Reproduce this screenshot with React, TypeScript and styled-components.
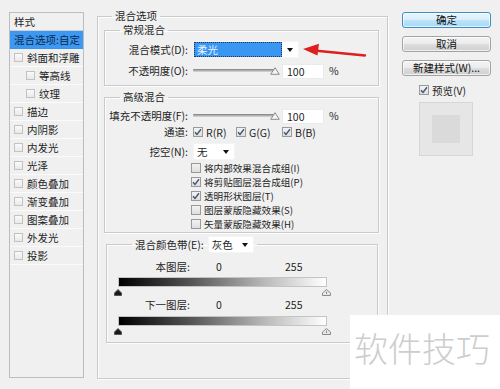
import styled, { createGlobalStyle } from "styled-components";

const GlobalStyle = createGlobalStyle`
  html, body { margin: 0; padding: 0; background: #f0f0f0; }
  body {
    font-family: "Noto Sans CJK SC", "Noto Sans", sans-serif;
    font-size: 10.5px;
    line-height: 14px;
    color: #1e1e1e;
  }
  * { box-sizing: border-box; }
`;

const Dialog = styled.div`
  position: relative;
  width: 500px;
  height: 389px;
  overflow: hidden;
  display: flex;
  align-items: flex-start;
  padding-left: 9px;
  background: #f0f0f0;
`;

/* ---------- left style list ---------- */

const StylePanel = styled.div`
  margin-top: 12px;
  width: 75px;
  height: 366px;
  border: 1px solid #bdbdbd;
  display: flex;
  flex-direction: column;
`;

const PanelHeader = styled.div`
  height: 18px;
  padding-left: 4px;
  line-height: 17px;
  border-bottom: 1px solid #d0d0d0;
`;

const PanelRow = styled.div<{ $indent?: number; $active?: boolean }>`
  display: flex;
  align-items: center;
  gap: 4px;
  height: 18px;
  padding-left: ${(p) => 4 + (p.$indent ?? 0) * 12}px;
  border-bottom: 1px solid ${(p) => (p.$active ? "#3a94ee" : "#fbfbfb")};
  background: ${(p) => (p.$active ? "#3d98f2" : "transparent")};
  color: ${(p) => (p.$active ? "#0d2745" : "#1e1e1e")};
  white-space: nowrap;
`;

const PanelBox = styled.span`
  width: 9px;
  height: 9px;
  border: 1px solid #c2c2c2;
  background: linear-gradient(#fafafa, #e9e9e9);
  flex: none;
`;

/* ---------- group boxes ---------- */

const Group = styled.fieldset<{ $height: number; $gapTop?: number }>`
  margin: ${(p) => p.$gapTop ?? 0}px 0 0 0;
  padding: 0;
  min-width: 0;
  height: ${(p) => p.$height}px;
  border: 1px solid #cacaca;
  box-shadow: inset 1px 1px 0 #fdfdfd, 1px 1px 0 #fdfdfd;
  display: flex;
  flex-direction: column;
`;

const MainGroup = styled(Group)`
  margin: 9px 0 0 13px;
  width: 291px;
  padding: 0 8px 0 6px;
`;

const BandGroup = styled(Group)`
  margin: 3px 1px 0 2px;
`;

const Legend = styled.legend<{ $offset: number }>`
  margin-left: ${(p) => p.$offset}px;
  padding: 0 3px;
  line-height: 14px;
  display: flex;
  align-items: center;
  gap: 4px;
`;

const Rows = styled.div<{ $top: number; $gap?: number }>`
  display: flex;
  flex-direction: column;
  gap: ${(p) => p.$gap ?? 0}px;
  padding-top: ${(p) => p.$top}px;
`;

const Row = styled.div<{ $height?: number; $mt?: number }>`
  display: flex;
  align-items: center;
  height: ${(p) => p.$height ?? 14}px;
  margin-top: ${(p) => p.$mt ?? 0}px;
`;

const Label = styled.span<{ $width?: number }>`
  width: ${(p) => p.$width ?? 83}px;
  text-align: right;
  margin-right: 5px;
  white-space: nowrap;
  flex: none;
`;

/* ---------- controls ---------- */

const Select = styled.div<{ $width: number }>`
  display: flex;
  align-items: center;
  width: ${(p) => p.$width}px;
  height: 17px;
  background: #fff;
  border: 1px solid #f4f4f4;
`;

const SelectValue = styled.span<{ $focused?: boolean }>`
  flex: 1;
  height: 100%;
  padding-left: 3px;
  line-height: 15px;
  background: ${(p) => (p.$focused ? "#3a96f3" : "transparent")};
  color: ${(p) => (p.$focused ? "#eaf4ff" : "#1e1e1e")};
  outline: ${(p) => (p.$focused ? "1px dotted #1b3552" : "none")};
  outline-offset: -1px;
`;

const Caret = styled.span`
  width: 16px;
  display: flex;
  justify-content: center;
  &::after {
    content: "";
    border-left: 3.5px solid transparent;
    border-right: 3.5px solid transparent;
    border-top: 4px solid #111;
  }
`;

const Slider = styled.div`
  position: relative;
  width: 82px;
  height: 3px;
  margin-top: -2px;
  background: linear-gradient(#7d7d7d, #b9b9b9 60%, #dadada);
  border-radius: 1px;
  flex: none;
`;

const SliderThumb = styled.svg`
  position: absolute;
  right: -5px;
  top: -2px;
`;

const NumberBox = styled.span`
  width: 42px;
  height: 15px;
  margin-left: 7px;
  padding-left: 4px;
  line-height: 13px;
  background: #fff;
  border: 1px solid #ebebeb;
`;

const Unit = styled.span`
  margin-left: 5px;
`;

const CheckItem = styled.label<{ $width?: number }>`
  display: flex;
  align-items: center;
  gap: 3px;
  height: 13px;
  line-height: 13px;
  width: ${(p) => (p.$width ? `${p.$width}px` : "auto")};
  white-space: nowrap;
`;

const Box = styled.span`
  width: 10px;
  height: 10px;
  border: 1px solid #9a9a9a;
  background: linear-gradient(#f3f3f3, #dedede);
  display: flex;
  align-items: center;
  justify-content: center;
  flex: none;
`;

const CheckList = styled.div`
  display: flex;
  flex-direction: column;
  margin: 1px 0 0 86px;
  font-size: 9.6px;
`;

const CheckRow = styled.div`
  height: 14px;
  display: flex;
  align-items: center;
`;

/* ---------- blend-if bands ---------- */

const LevelRow = styled.div<{ $mt: number }>`
  display: flex;
  align-items: center;
  height: 14px;
  margin-top: ${(p) => p.$mt}px;
`;

const LevelValue = styled.span<{ $ml: number; $width?: number }>`
  margin-left: ${(p) => p.$ml}px;
  width: ${(p) => (p.$width ? `${p.$width}px` : "auto")};
`;

const Ramp = styled.div<{ $mt: number }>`
  margin: ${(p) => p.$mt}px 0 0 11px;
  width: 209px;
  height: 10px;
  border: 1px solid #c4c4c4;
  background: linear-gradient(90deg, #000 0%, #555 35%, #b8b8b8 70%, #fff 100%);
`;

const ThumbRow = styled.div`
  display: flex;
  justify-content: space-between;
  width: 217px;
  margin: 2px 0 0 7px;
  height: 7px;
`;

/* ---------- right column ---------- */

const SideColumn = styled.div`
  margin: 12px 0 0 14px;
  width: 89px;
  display: flex;
  flex-direction: column;
  align-items: stretch;
`;

const Button = styled.div<{ $primary?: boolean; $mt?: number }>`
  height: 16px;
  margin-top: ${(p) => p.$mt ?? 0}px;
  border: 1px solid ${(p) => (p.$primary ? "#3c8ec6" : "#a3a3a3")};
  border-radius: 3px;
  background: ${(p) =>
    p.$primary
      ? "linear-gradient(#eaf6fd, #d6eefb 50%, #bde3f6 51%, #a7d9f5)"
      : "linear-gradient(#f4f4f4, #ebebeb 50%, #dddddd 51%, #cfcfcf)"};
  box-shadow: inset 0 0 0 1px rgba(255, 255, 255, 0.7);
  text-align: center;
  line-height: 14px;
  color: #111;
`;

const PreviewCheck = styled(CheckItem)`
  margin: 7px 0 0 17px;
  height: 14px;
`;

const PreviewBox = styled.div`
  margin: 5px 0 0 17px;
  width: 54px;
  height: 54px;
  border: 1px solid #d6d6d6;
  background: #e6e6e6;
  display: flex;
  align-items: center;
  justify-content: center;
`;

const PreviewSwatch = styled.div`
  width: 28px;
  height: 28px;
  background: #dadada;
`;

/* ---------- overlays ---------- */

const Arrow = styled.svg`
  position: absolute;
  left: 300px;
  top: 40px;
`;

const Watermark = styled.div`
  position: absolute;
  right: 0;
  bottom: 0;
  width: 150px;
  height: 74px;
  background: #fff;
  color: #cdcdcd;
  font-size: 34px;
  font-weight: 300;
  padding: 13px 0 0 4px;
  line-height: 40px;
`;

const Tick = () => (
  <svg width="8" height="8" viewBox="0 0 8 8">
    <path d="M1 4.2 L3 6.4 L7 1.3" fill="none" stroke="#3f5676" strokeWidth="1.4" />
  </svg>
);

const Check = ({ checked, text, width }: { checked?: boolean; text: string; width?: number }) => (
  <CheckItem $width={width}>
    <Box>{checked && <Tick />}</Box>
    {text}
  </CheckItem>
);

const DarkThumb = () => (
  <svg width="8" height="7" viewBox="0 0 8 7">
    <path d="M4 0.5 L7.5 4 L7.5 6.5 L0.5 6.5 L0.5 4 Z" fill="#1a1a1a" stroke="#555" />
  </svg>
);

const LightThumb = () => (
  <svg width="9" height="7" viewBox="0 0 9 7">
    <path d="M4.5 0.5 L8.5 4 L8.5 6.5 L0.5 6.5 L0.5 4 Z" fill="#e8e8e8" stroke="#8a8a8a" />
    <path d="M4.5 2.5 V5" stroke="#8a8a8a" />
  </svg>
);

const styleItems: { text: string; indent?: number }[] = [
  { text: "斜面和浮雕" },
  { text: "等高线", indent: 1 },
  { text: "纹理", indent: 1 },
  { text: "描边" },
  { text: "内阴影" },
  { text: "内发光" },
  { text: "光泽" },
  { text: "颜色叠加" },
  { text: "渐变叠加" },
  { text: "图案叠加" },
  { text: "外发光" },
  { text: "投影" },
];

const knockoutOptions = [
  { text: "将内部效果混合成组(I)", checked: false },
  { text: "将剪贴图层混合成组(P)", checked: true },
  { text: "透明形状图层(T)", checked: true },
  { text: "图层蒙版隐藏效果(S)", checked: false },
  { text: "矢量蒙版隐藏效果(H)", checked: false },
];

const OpacityRow = ({ label }: { label: string }) => (
  <Row>
    <Label>{label}</Label>
    <Slider>
      <SliderThumb width="10" height="8" viewBox="0 0 10 8">
        <path d="M5 0.7 L9.3 7.3 L0.7 7.3 Z" fill="#f4f4f4" stroke="#8c8c8c" />
      </SliderThumb>
    </Slider>
    <NumberBox>100</NumberBox>
    <Unit>%</Unit>
  </Row>
);

const Level = ({ label, first }: { label: string; first?: boolean }) => (
  <>
    <LevelRow $mt={first ? 7 : 2}>
      <Label $width={83}>{label}</Label>
      <LevelValue $ml={21} $width={69}>0</LevelValue>
      <LevelValue $ml={0}>255</LevelValue>
    </LevelRow>
    <Ramp $mt={first ? 3 : 4} />
    <ThumbRow>
      <DarkThumb />
      <LightThumb />
    </ThumbRow>
  </>
);

export default function App() {
  return (
    <Dialog>
      <GlobalStyle />

      <StylePanel>
        <PanelHeader>样式</PanelHeader>
        <PanelRow $active>混合选项:自定</PanelRow>
        {styleItems.map((item) => (
          <PanelRow key={item.text} $indent={item.indent}>
            <PanelBox />
            {item.text}
          </PanelRow>
        ))}
      </StylePanel>

      <MainGroup $height={370}>
        <Legend $offset={8}>混合选项</Legend>

        <Group $height={63}>
          <Legend $offset={15}>常规混合</Legend>
          <Rows $top={4} $gap={6}>
            <Row $height={17}>
              <Label>混合模式(D):</Label>
              <Select $width={106}>
                <SelectValue $focused>柔光</SelectValue>
                <Caret />
              </Select>
            </Row>
            <OpacityRow label="不透明度(O):" />
          </Rows>
        </Group>

        <Group $height={143} $gapTop={4}>
          <Legend $offset={15}>高级混合</Legend>
          <Rows $top={5}>
            <OpacityRow label="填充不透明度(F):" />
            <Row $mt={2}>
              <Label>通道:</Label>
              <Check checked text="R(R)" width={43} />
              <Check checked text="G(G)" width={46} />
              <Check checked text="B(B)" />
            </Row>
            <Row $height={17} $mt={4}>
              <Label>挖空(N):</Label>
              <Select $width={42}>
                <SelectValue>无</SelectValue>
                <Caret />
              </Select>
            </Row>
            <CheckList>
              {knockoutOptions.map((o) => (
                <CheckRow key={o.text}>
                  <Check checked={o.checked} text={o.text} />
                </CheckRow>
              ))}
            </CheckList>
          </Rows>
        </Group>

        <BandGroup $height={107}>
          <Legend $offset={25}>
            混合颜色带(E):
            <Select $width={46}>
              <SelectValue>灰色</SelectValue>
              <Caret />
            </Select>
          </Legend>
          <Level label="本图层:" first />
          <Level label="下一图层:" />
        </BandGroup>
      </MainGroup>

      <SideColumn>
        <Button $primary>确定</Button>
        <Button $mt={8}>取消</Button>
        <Button $mt={8}>新建样式(W)...</Button>
        <PreviewCheck>
          <Box>
            <Tick />
          </Box>
          预览(V)
        </PreviewCheck>
        <PreviewBox>
          <PreviewSwatch />
        </PreviewBox>
      </SideColumn>

      <Arrow width="70" height="22" viewBox="0 0 70 22">
        <path d="M14 10.5 L65 15.5" stroke="#dc1f1f" strokeWidth="2.3" strokeLinecap="round" />
        <path d="M3 9 L19 3.8 L17.5 15.5 Z" fill="#dc1f1f" />
      </Arrow>

      <Watermark>软件技巧</Watermark>
    </Dialog>
  );
}
